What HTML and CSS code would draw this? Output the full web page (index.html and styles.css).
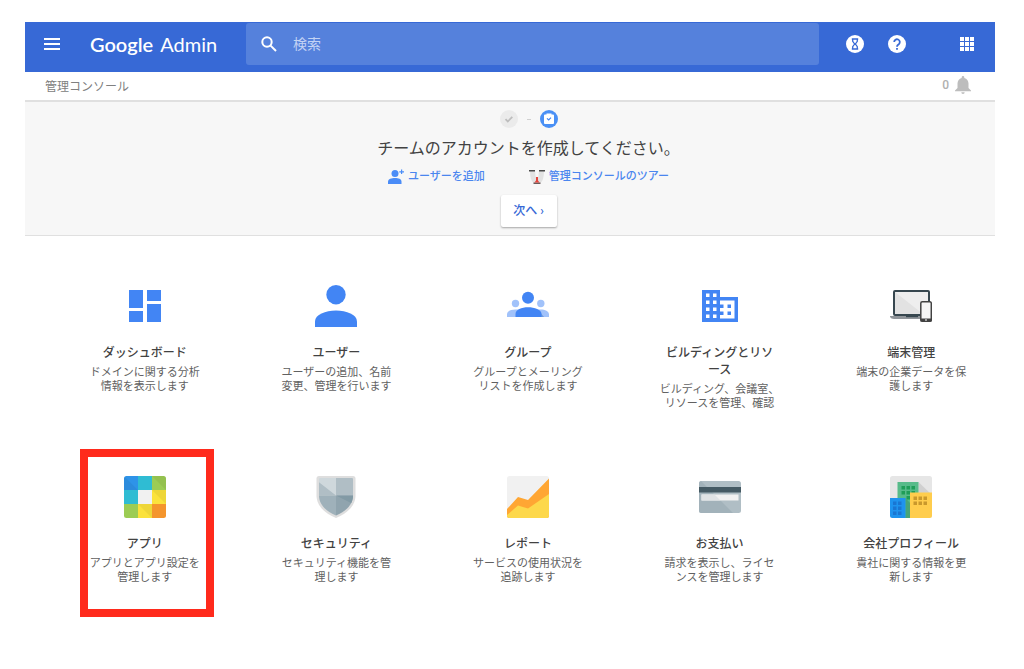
FILE: index.html
```html
<!DOCTYPE html>
<html lang="ja">
<head>
<meta charset="utf-8">
<meta name="viewport" content="width=device-width, initial-scale=1">
<title>管理コンソール</title>
<link rel="stylesheet" href="styles.css">
</head>
<body>
<div class="top">
  <header class="bar">
    <button class="icon-btn menu" type="button" aria-label="メニュー">
      <svg width="16" height="12" viewBox="0 0 16 12" fill="#fff"><path d="M0 0h16v2H0zM0 5h16v2H0zM0 10h16v2H0z"/></svg>
    </button>
    <a class="logo" href="#"><span class="brand">Google</span> Admin</a>
    <form class="search" role="search">
      <svg width="16" height="16" viewBox="0 0 16 16" fill="none" stroke="#fff" stroke-width="2"><circle cx="6" cy="6" r="4.7"/><path d="M9.6 9.6l5.4 5.4"/></svg>
      <input type="search" placeholder="検索" aria-label="検索">
    </form>
    <div class="tools">
      <button class="icon-btn" type="button" aria-label="タスク">
        <svg width="18" height="18" viewBox="0 0 18 18"><circle cx="9" cy="9" r="9" fill="#fff"/><path d="M5.8 4h6.4M5.8 14h6.4M6.7 4v2.3L8.6 9l-1.9 2.7V14M11.3 4v2.3L9.4 9l1.9 2.7V14" fill="none" stroke="#3769d6" stroke-width="1.3"/></svg>
      </button>
      <button class="icon-btn" type="button" aria-label="ヘルプ">
        <svg width="18" height="18" viewBox="0 0 18 18"><circle cx="9" cy="9" r="9" fill="#fff"/><path d="M6.2 7.1a2.8 2.8 0 1 1 4.6 2.1C9.700 10 9 10.300 9 11.700" fill="none" stroke="#3769d6" stroke-width="1.800"/><path d="M8.100 13h1.800v1.800H8.100z" fill="#3769d6"/></svg>
      </button>
      <button class="icon-btn launcher" type="button" aria-label="アプリ一覧">
        <svg width="14" height="14" viewBox="0 0 14 14" fill="#fff"><path d="M0 0h4v4H0zM5 0h4v4H5zM10 0h4v4h-4zM0 5h4v4H0zM5 5h4v4H5zM10 5h4v4h-4zM0 10h4v4H0zM5 10h4v4H5zM10 10h4v4h-4z"/></svg>
      </button>
    </div>
  </header>

  <nav class="crumbs">
    <span>管理コンソール</span>
    <button class="alerts" type="button" aria-label="通知 0 件">
      <span>0</span>
      <svg width="16" height="18" viewBox="0 0 16 18" fill="#bdbdbd"><path d="M8 0c.8 0 1.300.6 1.300 1.400v.5C11.900 2.500 13.500 4.700 13.500 7.500V12L16 14.500v.8H0v-.8L2.500 12V7.500c0-2.800 1.600-5 4.200-5.600v-.5C6.700.6 7.200 0 8 0zM6.300 16.200h3.400a1.700 1.700 0 0 1-3.400 0z"/></svg>
    </button>
  </nav>

  <section class="setup">
    <div class="steps">
      <svg width="18" height="18" viewBox="0 0 18 18"><circle cx="9" cy="9" r="9" fill="#ebebeb"/><path d="M5.500 9.200l2.300 2.300 4.500-4.700" fill="none" stroke="#bdbdbd" stroke-width="1.800"/></svg>
      <span class="dash"></span>
      <svg width="18" height="18" viewBox="0 0 18 18"><circle cx="9" cy="9" r="9" fill="#4a90f5"/><path d="M5 4.500h1.500V3.500h5v1H13q1 0 1 1V13q0 1-1 1H5q-1 0-1-1V5.500q0-1 1-1z" fill="#fff"/><path d="M7 8.300l1.700 1.700L11 7.600" fill="none" stroke="#4285f4" stroke-width="1.200"/></svg>
    </div>
    <h1>チームのアカウントを作成してください。</h1>
    <div class="links">
      <a href="#">
        <svg width="16" height="16" viewBox="0 0 16 16" fill="#4a8cf7"><circle cx="7" cy="4.500" r="3.500"/><path d="M0 15v-2.500C0 10 3.500 9 7 9s6.500 1 6.500 3.500V15z"/><path d="M13 .5h1.200v1.700H16v1.200h-1.800v1.700H13V3.400h-1.700V2.200H13z"/></svg>
        ユーザーを追加</a>
      <a href="#">
        <svg width="16" height="16" viewBox="0 0 16 16"><path d="M1 2h14q0 9-3.500 12h-7Q1 11 1 2z" fill="#e2e2e2"/><path d="M6 2h4l-.7 6H6.700z" fill="#f7f7f7"/><path d="M0 1h6v1.600H0zM10 1h6v1.600h-6z" fill="#4a4a4a"/><path d="M4.500 13.500h7V15h-7z" fill="#6a5a5a"/><path d="M7 8h2v3.500l1.500 2h-5l1.500-2z" fill="#e5453d"/></svg>
        管理コンソールのツアー</a>
    </div>
    <button class="next" type="button">次へ ›</button>
  </section>
</div>

<main>
  <ul class="apps">
    <li><a class="app" href="#">
      <svg width="42" height="42" viewBox="0 0 42 42" fill="#4285f4"><path d="M5 5h14v18H5zM23 5h14v11H23zM5 26h14v11H5zM23 19h14v18H23z"/></svg>
      <h2>ダッシュボード</h2>
      <p>ドメインに関する分析<br>情報を表示します</p>
    </a></li>
    <li><a class="app" href="#">
      <svg width="42" height="42" viewBox="0 0 42 42" fill="#4285f4"><circle cx="21" cy="9.700" r="9.700"/><path d="M0 42v-5.500C0 29.500 10.500 25.500 21 25.500s21 4 21 11V42z"/></svg>
      <h2>ユーザー</h2>
      <p>ユーザーの追加、名前<br>変更、管理を行います</p>
    </a></li>
    <li><a class="app" href="#">
      <svg width="42" height="42" viewBox="0 0 42 42"><g fill="#a1c2fa"><circle cx="8.500" cy="18.500" r="3.700"/><circle cx="33.800" cy="18.500" r="3.700"/><path d="M0 32v-2.500C0 26 4 24.500 8.500 24.500h5V32zM42 32v-2.500c0-3.500-4-5-8.500-5h-5V32z"/></g><path d="M32 26l5 6h-5z" fill="#6f9bdc"/><circle cx="21" cy="12.700" r="6" fill="#4285f4"/><path d="M8.500 32v-3c0-4.500 6-6.800 12.500-6.800S34.500 24.500 34.500 29v3z" fill="#4285f4"/></svg>
      <h2>グループ</h2>
      <p>グループとメーリング<br>リストを作成します</p>
    </a></li>
    <li><a class="app" href="#">
      <svg width="42" height="42" viewBox="0 0 42 42"><path d="M3 5h18v7h18v25H3z" fill="#4285f4"/><path d="M7 8.500h3.500V12H7zM14 8.500h3.500V12H14zM7 15.500h3.500V19H7zM14 15.500h3.500V19H14zM7 22.500h3.500V26H7zM14 22.500h3.500V26H14zM7 29.500h3.500V33H7zM14 29.500h3.500V33H14zM21 15.500h14.500v18H21V30h3.500v-3.500H21V23h3.500v-3.500H21z" fill="#fff"/><path d="M28.500 19.500H32V23h-3.500zM28.500 26.500H32V30h-3.500z" fill="#4285f4"/></svg>
      <h2>ビルディングとリソ<br>ース</h2>
      <p>ビルディング、会議室、<br>リソースを管理、確認</p>
    </a></li>
    <li><a class="app" href="#">
      <svg width="42" height="42" viewBox="0 0 42 42"><rect x="4" y="6" width="35" height="24" rx="1" fill="#eee" stroke="#37474f" stroke-width="2"/><path d="M5 7l28 22H5z" fill="#e2e2e2"/><path d="M0 31h32v1.500q-.5 1.500-2 1.500H4q-3 0-4-2z" fill="#90959a"/><path d="M16 31h12v1.200H16z" fill="#37474f"/><rect x="30.800" y="16.800" width="10.500" height="19.500" rx="1.500" fill="#f5f5f5" stroke="#424242" stroke-width="1.500"/><path d="M30.500 33.500h11v3h-11z" fill="#424242"/><path d="M35 34.500h2v1h-2z" fill="#fff"/></svg>
      <h2>端末管理</h2>
      <p>端末の企業データを保<br>護します</p>
    </a></li>

    <li class="marked"><a class="app" href="#">
      <svg width="42" height="42" viewBox="0 0 42 42"><clipPath id="tile"><rect width="42" height="42" rx="2.500"/></clipPath><g clip-path="url(#tile)"><path d="M0 0h14v14H0z" fill="#2e93e8"/><path d="M14 0h14v14H14zM0 14h14v14H0z" fill="#2fbcd3"/><path d="M28 0h14v14H28zM0 28h14v14H0z" fill="#9ccc54"/><path d="M28 14h14v14H28zM14 28h14v14H14z" fill="#fbe23c"/><path d="M14 14h14v14H14z" fill="#f1f1f1"/><path d="M28 28h14v14H28z" fill="#f4952d"/><path d="M0 0l14 14H0zM28 0l14 14V0zM28 14l14 14V14zM14 28l14 14V28z" fill="#000" opacity=".05"/></g></svg>
      <h2>アプリ</h2>
      <p>アプリとアプリ設定を<br>管理します</p>
    </a></li>
    <li><a class="app" href="#">
      <svg width="42" height="42" viewBox="0 0 42 42"><clipPath id="shield"><path d="M5 2h32q1 0 1 1v16.500C38 29 30 36 21 39.500 12 36 4 29 4 19.500V3q0-1 1-1z"/></clipPath><path d="M4 0h34q2.500 0 2.500 2.500v17C40.500 30 31.500 38 21 42 10.500 38 1.500 30 1.500 19.500v-17Q1.500 0 4 0z" fill="#dedede"/><g clip-path="url(#shield)"><path d="M0 0h21v19.500H0z" fill="#cfd8dc"/><path d="M21 0h21v19.500H21zM0 3l21 16.500H0z" fill="#b0bec5"/><path d="M0 19.500h21V42H0z" fill="#9fb1ba"/><path d="M21 19.500h21V42H21z" fill="#90a4ae"/><path d="M21 19.500h19V29z" fill="#829aa5"/></g></svg>
      <h2>セキュリティ</h2>
      <p>セキュリティ機能を管<br>理します</p>
    </a></li>
    <li><a class="app" href="#">
      <svg width="42" height="42" viewBox="0 0 42 42"><clipPath id="chart"><rect width="42" height="42" rx="2.500"/></clipPath><g clip-path="url(#chart)"><path d="M0 0h42v42H0z" fill="#f1f1f1"/><path d="M0 33l11-12 10 3L42 2.500V42H0z" fill="#ffa633"/><path d="M0 39l11-9.500 10 3L42 18v24H0z" fill="#fdd84b"/></g></svg>
      <h2>レポート</h2>
      <p>サービスの使用状況を<br>追跡します</p>
    </a></li>
    <li><a class="app" href="#">
      <svg width="42" height="42" viewBox="0 0 42 42"><rect y="5" width="42" height="32" rx="2.500" fill="#b0bec5"/><path d="M2 5l32 32H2.500Q0 37 0 34.500V7.500Q0 5 2 5z" fill="#a2b2ba"/><path d="M0 11h42v5.500H0z" fill="#455a64"/><path d="M2.500 18.500h37v6h-37z" fill="#f1f1f1"/><path d="M2.500 18.500h13l6 6h-19z" fill="#e0e3e5"/></svg>
      <h2>お支払い</h2>
      <p>請求を表示し、ライセ<br>ンスを管理します</p>
    </a></li>
    <li><a class="app" href="#">
      <svg width="42" height="42" viewBox="0 0 42 42"><clipPath id="city"><rect width="42" height="42" rx="2.500"/></clipPath><g clip-path="url(#city)"><path d="M0 0h42v42H0z" fill="#e6e6e6"/><path d="M28.500 6L42 19v10H28z" fill="#d0d0d0"/><path d="M7.500 6h21v36h-21z" fill="#57bb8a"/><path d="M11.500 10h3.500v3.500h-3.500zM16.500 10H20v3.500h-3.500zM21.500 10H25v3.500h-3.500zM11.500 15h3.500v3.500h-3.500zM16.500 15H20v3.500h-3.500zM21.500 15H25v3.500h-3.500zM16.500 20H20v3.500h-3.500z" fill="#1f9d58"/><path d="M15.500 22l4.500 5v15h-4.500z" fill="#47a478"/><path d="M0 22h15.500v20H0z" fill="#1e93ee"/><path d="M3 25.500h3.500V29H3zM8 25.500h3.500V29H8zM3 30.500h3.500V34H3zM8 30.500h3.500V34H8zM3 35.500h3.500V39H3zM8 35.500h3.500V39H8z" fill="#1976d2"/><path d="M20 16.500h22V42H20z" fill="#ffcd4d"/><path d="M23.500 20.500H27V24h-3.500zM28.500 20.500H32V24h-3.500zM33.500 20.500H37V24h-3.500zM23.500 25.500H27V29h-3.500zM28.500 25.500H32V29h-3.500zM33.500 25.500H37V29h-3.500z" fill="#c9982c"/></g></svg>
      <h2>会社プロフィール</h2>
      <p>貴社に関する情報を更<br>新します</p>
    </a></li>
  </ul>
</main>
</body>
</html>
```

FILE: styles.css
```css
*,
*::after {
  box-sizing: border-box;
}

body {
  margin: 0;
  padding-top: 22px;
  background: #fff;
  color: #424242;
  font-family: Roboto, "Noto Sans CJK JP", sans-serif;
  font-size: 12px;
}

button,
input {
  border: 0;
  padding: 0;
  background: none;
  color: inherit;
  font: inherit;
}

a {
  color: inherit;
  text-decoration: none;
}

svg {
  display: block;
  flex: none;
}

.top {
  margin: 0 29px 0 25px;
}

/* Blue header */
.bar {
  display: flex;
  align-items: center;
  height: 50px;
  padding-bottom: 6px;
  background: #3769d6;
  color: #fff;
}

.icon-btn {
  display: flex;
  flex: none;
}

.menu {
  margin-left: 19px;
}

.logo {
  display: flex;
  gap: 7px;
  width: 156px;
  margin-left: 30px;
  font-family: Lato, sans-serif;
  font-size: 20px;
  line-height: 24px;
  white-space: nowrap;
}

.brand {
  font-weight: 600;
}

.search {
  display: flex;
  flex: 1;
  align-items: center;
  gap: 16px;
  height: 42px;
  padding: 0 15px;
  border-radius: 3px;
  background: #5581dc;
}

.search input {
  flex: 1;
  min-width: 0;
  outline: 0;
  font-size: 14px;
  line-height: 20px;
}

.search input::placeholder {
  color: #c3d3f4;
  opacity: 1;
}

.tools {
  display: flex;
  align-items: center;
  gap: 24px;
  padding: 0 21px 0 27px;
}

.launcher {
  margin-left: 30px;
}

/* Breadcrumb row */
.crumbs {
  display: flex;
  align-items: center;
  justify-content: space-between;
  height: 30px;
  padding: 0 24px 2px 20px;
  border-bottom: 2px solid #e0e0e0;
  color: #808080;
}

.alerts {
  display: flex;
  align-items: center;
  gap: 6px;
  color: #b0b0b0;
  font-weight: 500;
}

/* Setup guide */
.setup {
  display: flex;
  flex-direction: column;
  align-items: center;
  gap: 8px;
  padding: 8px 0 8px 37px;
  border-bottom: 1px solid #e0e0e0;
  background: #f7f7f7;
}

.steps {
  display: flex;
  align-items: center;
  gap: 9px;
}

.dash {
  width: 4px;
  height: 1px;
  background: #d0d0d0;
}

h1 {
  margin: 0;
  padding-top: 1px;
  font-size: 16px;
  font-weight: 400;
  line-height: 24px;
}

.links {
  display: flex;
  gap: 44px;
  color: #4a86ef;
  font-size: 11px;
  font-weight: 500;
  line-height: 16px;
}

.links a {
  display: flex;
  gap: 4px;
}

.next {
  min-width: 56px;
  margin-top: 2px;
  border-radius: 2px;
  background: #fff;
  box-shadow: 0 1px 2px #0005;
  color: #3769d6;
  font-weight: 500;
  line-height: 32px;
}

/* App grid */
main {
  padding: 49px 17px 48px 49px;
}

.apps {
  display: grid;
  grid-template-columns: repeat(5, 1fr);
  row-gap: 65px;
  margin: 0;
  padding: 0;
  list-style: none;
}

.apps li {
  display: flex;
  position: relative;
  justify-content: center;
}

.app {
  display: flex;
  flex-direction: column;
  align-items: center;
  text-align: center;
  white-space: nowrap;
}

.app h2 {
  margin: 18px 0 4px;
  font-size: 12px;
  font-weight: 500;
  line-height: 17px;
}

.app p {
  margin: 0;
  color: #616161;
  font-size: 11px;
  line-height: 14px;
}

/* Red frame laid over the highlighted app */
.marked::after {
  content: "";
  position: absolute;
  top: -27px;
  left: 31px;
  width: 134px;
  height: 168px;
  border: 8px solid #ff2a1c;
  pointer-events: none;
}
```
